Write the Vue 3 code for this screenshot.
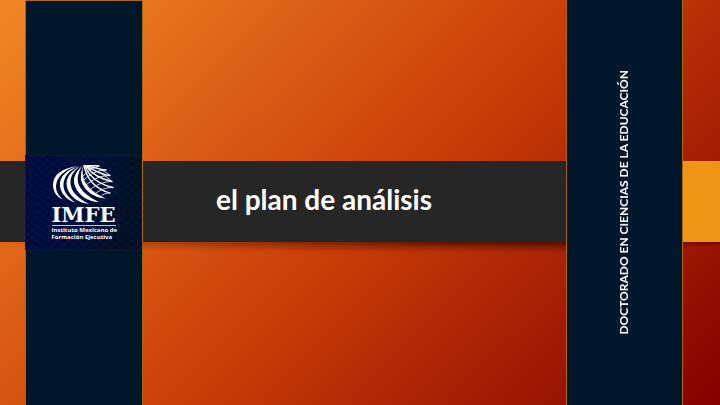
<script setup>
const title = 'el plan de análisis'
const program = 'DOCTORADO EN CIENCIAS DE LA EDUCACIÓN'
</script>

<template>
  <main class="slide">
    <header class="band">
      <h1>{{ title }}</h1>
    </header>
    <div class="band-shadow"></div>
    <div class="accent"></div>
    <div class="accent-shadow"></div>
    <div class="column brand"></div>
    <section class="logo">
      <svg class="globe" viewBox="0 0 64 40" role="img" aria-label="IMFE">
        <g fill="#fff">
          <path d="M26 1C10 3 1 10 1 20c0 7 4 12 10 14.500C5 29 3 24 4.500 18 6.500 10 14 4 26 1z" />
          <path d="M27 1C14 5 7 12 8 21c1 8 7 14 15 16.500C15 31 11 26 11.500 19 12 11 18 5 27 1z" />
          <path d="M28 1C19 6 13 13 15 22c2 9 11 16 22 17C25 33 19 26 18.500 18.500 18 11 22 6 28 1z" />
          <path d="M30 1C24 7 20 13 23 21c3 9 13 16 24 16C36 32 28 25 26 17.500 25 11 27 6 30 1z" />
          <path d="M31 1C29 7 28 12 30 18c4 9 13 15 24 15.500C43 29 35 22 32 15 31 11 30 6 31 1z" />
        </g>
        <g fill="none" stroke="#fff" stroke-width="1.300" stroke-linecap="round">
          <path d="M32 1c3 13 12 23 26 27" />
          <path d="M33 1c4 10 13 18 28 21.500" />
          <path d="M34 1c6 8 14 13 26 15.500" />
          <path d="M35 1c7 5 14 8 23 9.500" />
          <path d="M35 1c6 1 12 3 19 4" />
          <path d="M32 1c5-1 10-1 15 0" />
        </g>
        <g fill="none" stroke="#e8edf8" stroke-width=".900">
          <path d="M54 5C46 5 38 9 32 15" />
          <path d="M58 10.500c-10 0-17 4-24 9.500" />
          <path d="M60 16.500c-9 0-17 4-22 8.500" />
          <path d="M61 22.500c-7 0-13 2-18 6.500" />
          <path d="M58 28c-4 0-7 1-9 3.500" />
          <path d="M47 1C40 3 35 7 31 11" />
          <path d="M40 1c8 3 14 6 18 9.500M36 3c10 3 18 8 24 13.500" />
        </g>
      </svg>
      <strong class="acronym">IMFE</strong>
      <span class="full">Instituto Mexicano de<br />Formación Ejecutiva</span>
    </section>
    <aside class="column program">
      <p>{{ program }}</p>
    </aside>
  </main>
</template>

<style>
body {
  margin: 0;
}
</style>

<style scoped>
.slide {
  display: grid;
  grid-template-columns: 25fr 118fr 423fr 117fr 37fr;
  grid-template-rows: 161fr 81fr 163fr;
  min-height: 100vh;
  overflow: hidden;
  color: #fff;
  font-family: Lato, "Open Sans", sans-serif;
  background: linear-gradient(135deg, #f08726 0%, #ce4009 50%, #850000 100%);
}

.band {
  grid-area: 2 / 1 / 3 / 4;
  display: flex;
  align-items: center;
  justify-content: center;
  padding: 0 0 6px 82px;
  background: #262626;
}

h1 {
  margin: 0;
  font-size: 28px;
  line-height: 32px;
  font-weight: 700;
}

.band-shadow {
  grid-area: 3 / 1 / 4 / 4;
  height: 14px;
  background: linear-gradient(to bottom, rgb(50 8 0 / 70%), rgb(50 8 0 / 0%));
  mask-image: radial-gradient(ellipse 100% 100% at 100% 0, #000 20%, transparent 100%);
}

.accent {
  grid-area: 2 / 5 / 3 / 6;
  background: #f09415;
}

.accent-shadow {
  grid-area: 3 / 5 / 4 / 6;
  height: 4px;
  background: linear-gradient(to bottom, rgb(60 0 0 / 60%), rgb(60 0 0 / 0%));
}

.column {
  box-sizing: border-box;
  background: #00172b;
  border: 0 solid #a8690f;
}

.brand {
  grid-area: 1 / 2 / 4 / 3;
  border-width: 1px 1px 0;
}

.program {
  grid-area: 1 / 4 / 4 / 5;
  display: flex;
  align-items: center;
  justify-content: center;
  padding-right: 2px;
  border-width: 0 1px;
}

.program p {
  margin: 0;
  font-size: 12px;
  line-height: 20px;
  font-weight: 700;
  white-space: nowrap;
  writing-mode: vertical-rl;
  transform: rotate(180deg);
}

.logo {
  grid-area: 2 / 2 / 3 / 3;
  align-self: center;
  display: flex;
  flex-direction: column;
  align-items: center;
  box-sizing: border-box;
  margin: -6px 1px -8px 0;
  padding: 9px 0 8px;
  border: 1px solid #0c1445;
  background:
    repeating-linear-gradient(35deg, rgb(10 40 130 / 14%) 0 2px, transparent 2px 6px),
    repeating-linear-gradient(145deg, rgb(0 5 30 / 30%) 0 2px, transparent 2px 6px),
    linear-gradient(100deg, #020b42 0%, #00103c 50%, #001322 88%, #000f38 100%);
}

.globe {
  width: 64px;
  height: 40px;
}

.acronym {
  font-family: "DejaVu Serif", serif;
  font-size: 21px;
  line-height: 20px;
}

.full {
  width: 64px;
  padding-top: 1px;
  border-top: 1px solid #b9c3d6;
  font-family: "Open Sans", sans-serif;
  font-size: 6px;
  line-height: 7px;
  font-weight: 700;
  white-space: nowrap;
}
</style>
